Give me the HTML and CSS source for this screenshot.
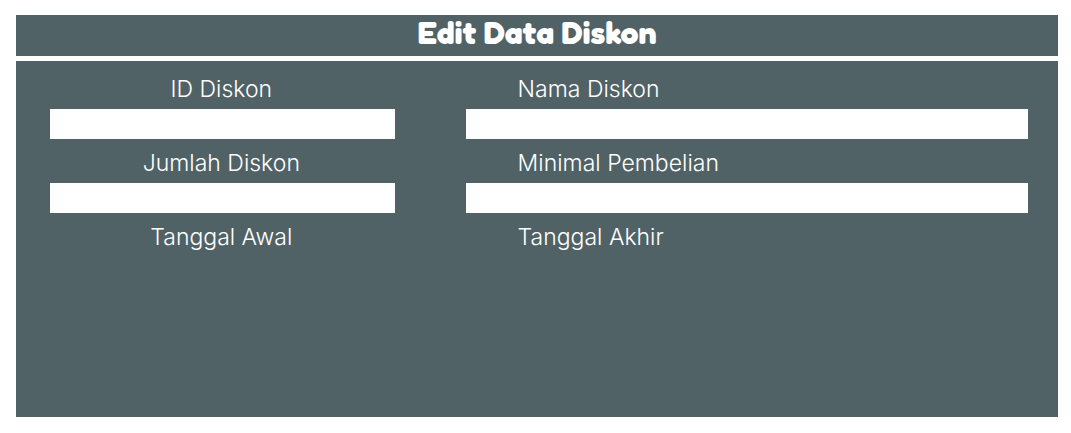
FILE: index.html
```html
<!DOCTYPE html>
<html lang="id">
<head>
<meta charset="utf-8">
<meta name="viewport" content="width=device-width, initial-scale=1">
<title>Edit Data Diskon</title>
<link rel="stylesheet" href="styles.css">
</head>
<body>
<main class="panel">
  <h1 class="title">Edit Data Diskon</h1>
  <form class="form">
    <div class="column column-left">
      <label class="label" for="id">ID Diskon</label>
      <input class="field" id="id" type="text">
      <label class="label" for="jumlah">Jumlah Diskon</label>
      <input class="field" id="jumlah" type="text">
      <span class="label">Tanggal Awal</span>
    </div>
    <div class="column column-right">
      <label class="label" for="nama">Nama Diskon</label>
      <input class="field" id="nama" type="text">
      <label class="label" for="minimal">Minimal Pembelian</label>
      <input class="field" id="minimal" type="text">
      <span class="label">Tanggal Akhir</span>
    </div>
  </form>
</main>
</body>
</html>
```
FILE: styles.css
```css
* {
  box-sizing: border-box;
}

body {
  margin: 0;
  padding: 15px 13px 16px 16px;
  min-height: 100vh;
  display: flex;
  background: #fff;
  color: #fff;
  font-family: Inter, sans-serif;
}

.panel {
  flex: 1;
  background: #506265;
}

.title {
  margin: 0;
  padding-bottom: 5px;
  border-bottom: 5px solid #fff;
  font-family: Fredoka, "Fredoka One", Lato, sans-serif;
  font-size: 32px;
  font-weight: 900;
  line-height: 36px;
  text-align: center;
}

.form {
  display: grid;
  grid-template-columns: 345fr 563fr;
  column-gap: 71px;
  padding: 4px 30px 16px 34px;
}

.column {
  display: flex;
  flex-direction: column;
}

.label {
  padding-top: 4px;
  font-size: 23px;
  font-weight: 300;
  line-height: 40px;
}

.column-left .label {
  padding-right: 2px;
  text-align: center;
}

.column-right .label {
  padding-left: 52px;
}

.field {
  width: 100%;
  height: 30px;
  padding: 0 8px;
  border: 0;
  border-radius: 0;
  background: #fff;
  color: #222;
  font: inherit;
  font-size: 18px;
}
```
